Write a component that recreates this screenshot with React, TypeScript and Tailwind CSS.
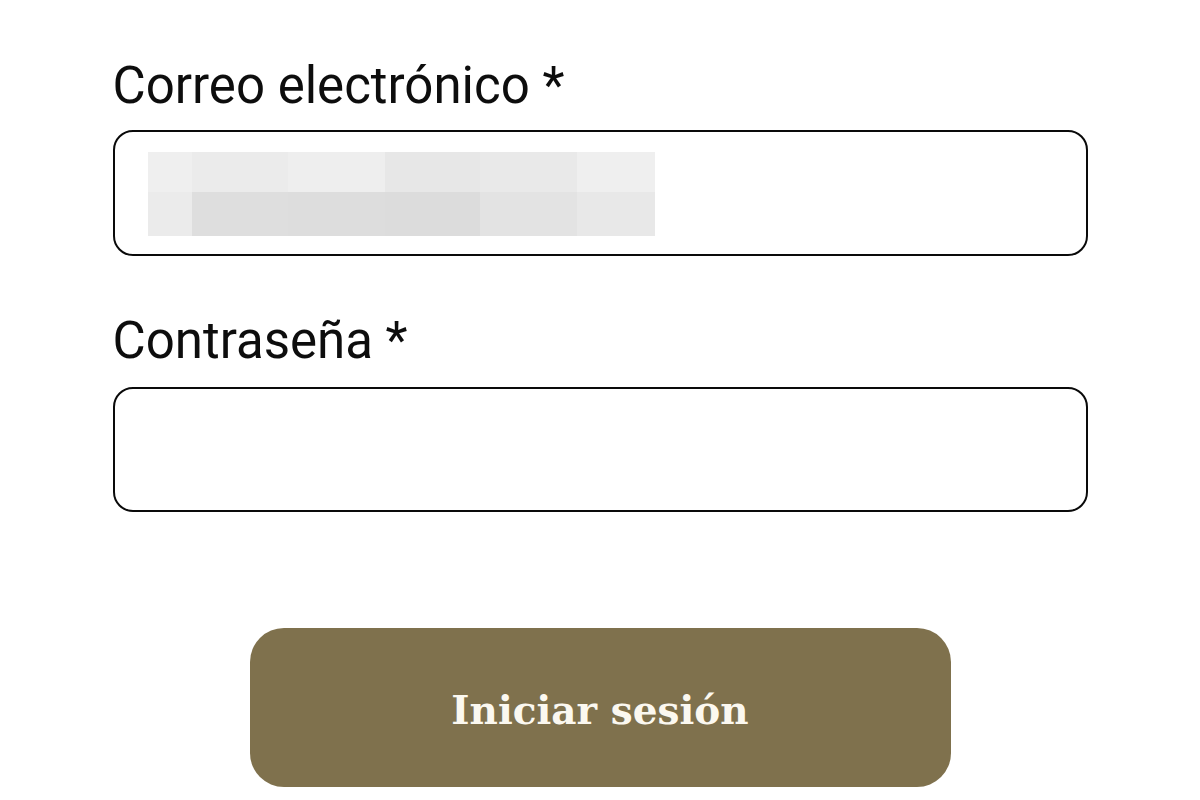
import React from "react";

export default function App() {
  return (
    <div className="w-full h-[800px] bg-white overflow-hidden" style={{ fontFamily: "Roboto, 'Liberation Sans', sans-serif" }}>
      <div className="mx-auto w-[975px] pt-[56px]">
        <label className="block text-[51px] leading-[60px] text-[#0d0d0d] font-normal">Correo electrónico *</label>
        <div className="mt-[14px] h-[126px] rounded-[20px] border-2 border-[#0a0a0a] pl-[33px] pt-[20px]">
          <div className="grid grid-cols-[44px_96px_97px_95px_97px_78px] grid-rows-[40px_44px] w-[507px]">
            <div className="bg-[#efefef]" />
            <div className="bg-[#ebebeb]" />
            <div className="bg-[#eeeeee]" />
            <div className="bg-[#e7e7e7]" />
            <div className="bg-[#e9e9e9]" />
            <div className="bg-[#efefef]" />
            <div className="bg-[#ebebeb]" />
            <div className="bg-[#dedede]" />
            <div className="bg-[#dddddd]" />
            <div className="bg-[#dcdcdc]" />
            <div className="bg-[#e3e3e3]" />
            <div className="bg-[#e8e8e8]" />
          </div>
        </div>
        <label className="block mt-[55px] text-[51px] leading-[60px] text-[#0d0d0d] font-normal">Contraseña *</label>
        <div className="mt-[16px] h-[125px] rounded-[20px] border-2 border-[#0a0a0a]" />
        <div className="flex justify-center mt-[116px]">
          <button
            className="w-[701px] h-[159px] rounded-[34px] bg-[#7f714d] text-[#fbf8f0] text-[39px] font-bold pt-[6px]"
            style={{ fontFamily: "'DejaVu Serif', 'Liberation Serif', serif" }}
          >
            Iniciar sesión
          </button>
        </div>
      </div>
    </div>
  );
}
